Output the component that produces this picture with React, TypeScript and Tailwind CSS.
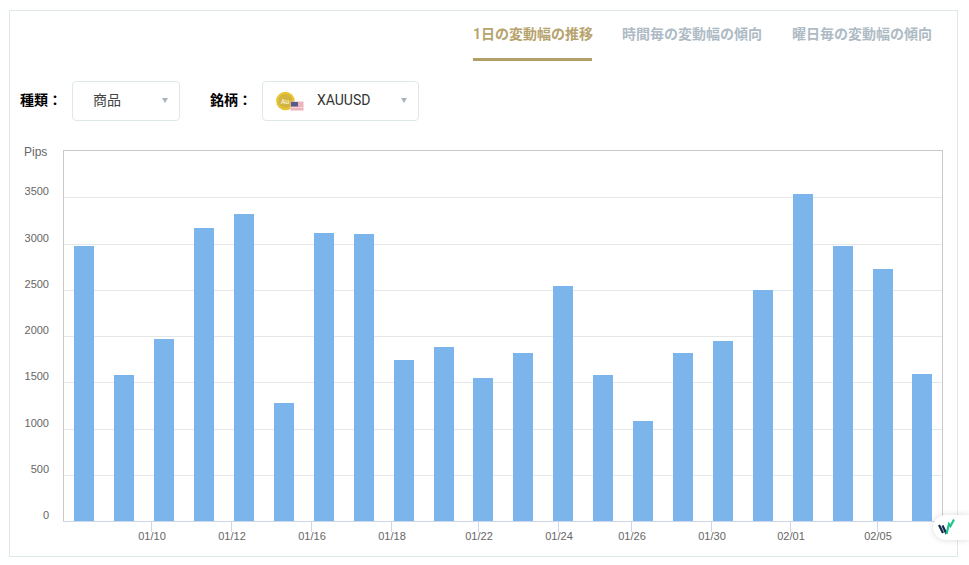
const tabs = ['1日の変動幅の推移', '時間毎の変動幅の傾向', '曜日毎の変動幅の傾向'];

// bar left edge and top edge, in chart pixels
const bars = [
  [74, 246], [114, 375], [154, 339], [194, 228], [234, 214], [274, 403], [314, 233], [354, 234],
  [394, 360], [434, 347], [473, 378], [513, 353], [553, 286], [593, 375], [633, 421], [673, 353],
  [713, 341], [753, 290], [793, 194], [833, 246], [873, 269], [912, 374],
];

const yTicks = [
  ['3500', 197], ['3000', 244], ['2500', 290], ['2000', 336],
  ['1500', 382], ['1000', 429], ['500', 475],
] as const;

const xTicks = [
  ['01/10', 151], ['01/12', 231], ['01/16', 311], ['01/18', 391], ['01/22', 478],
  ['01/24', 558], ['01/26', 631], ['01/30', 711], ['02/01', 790], ['02/05', 877],
] as const;

function Caret() {
  return <span className="h-0 w-0 border-x-[3px] border-t-[5px] border-x-transparent border-t-[#a9b3bb]" />;
}

function GoldIcon() {
  return (
    <svg width="28" height="22" viewBox="0 0 28 22" className="shrink-0">
      <circle cx="9.4" cy="12" r="9.3" fill="#e8c435" />
      <circle cx="9.4" cy="12" r="7" fill="#d2b440" />
      <text x="9" y="14.5" textAnchor="middle" fontSize="7" fontWeight="700" fill="#f3e9bd" fontFamily="Roboto, sans-serif">Au</text>
      <rect x="14.5" y="12.5" width="13" height="9" fill="#eeb3bd" />
      <rect x="14.5" y="18" width="13" height="1" fill="#f5d5da" />
      <rect x="15" y="13" width="7" height="4.5" fill="#565a8c" />
    </svg>
  );
}

function Chart() {
  return (
    <svg width="949" height="410" viewBox="0 0 949 410" className="block" fontFamily="'Liberation Sans', Arial, sans-serif">
      {/* svg origin is page x=10, y=146 -> shift so numbers below are page coords */}
      <g transform="translate(-10 -146)">
        <rect x="63.5" y="150.5" width="879" height="371" fill="none" stroke="#c9c9c9" />
        {yTicks.map(([label, y]) => (
          <g key={label}>
            <line x1="64" x2="942" y1={y + 0.5} y2={y + 0.5} stroke="#e3e7e8" />
            <text x="49" y={y - 2} textAnchor="end" fontSize="11" fill="#666">{label}</text>
          </g>
        ))}
        <text x="49" y="519" textAnchor="end" fontSize="11" fill="#666">0</text>
        <text x="24" y="156" fontSize="12" fill="#666">Pips</text>
        {bars.map(([x, top]) => (
          <rect key={x} x={x} y={top} width="20" height={521 - top} fill="#7cb5ec" />
        ))}
        <line x1="63" x2="943" y1="521.5" y2="521.5" stroke="#ccd6eb" />
        {xTicks.map(([label, x]) => (
          <g key={label}>
            <line x1={x + 0.5} x2={x + 0.5} y1="522" y2="532" stroke="#ccd6eb" />
            <text x={x + 1} y="540" textAnchor="middle" fontSize="11" fill="#666">{label}</text>
          </g>
        ))}
      </g>
    </svg>
  );
}

export default function App() {
  return (
    <div className="relative h-[565px] w-[969px] overflow-hidden bg-white pl-[9px] pt-[10px] font-['Roboto','Noto_Sans_CJK_JP',sans-serif]">
      <div className="h-[547px] w-[949px] border border-[#dfe8e8]">
        <div className="flex justify-end gap-[30px] pr-[25px]">
          {tabs.map((tab, i) => (
            <div
              key={tab}
              className={`h-[50px] whitespace-nowrap pt-[13px] text-[14px] font-bold leading-[20px] ${
                i === 0 ? 'w-[119px] border-b-[3px] border-[#b09f66] text-[#b6a36d]' : 'text-[#aebbc5]'
              }`}
            >
              {tab}
            </div>
          ))}
        </div>

        <div className="mt-[20px] flex items-center pl-[10px]">
          <span className="w-[52px] pb-[2px] text-[14px] font-bold text-black">種類：</span>
          <div className="flex h-[40px] w-[108px] items-center justify-between rounded border border-[#dfe8e8] pb-[2px] pl-[20px] pr-[11px] text-[14px] text-[#444]">
            商品
            <Caret />
          </div>
          <span className="ml-[30px] w-[52px] pb-[2px] text-[14px] font-bold text-black">銘柄：</span>
          <div className="flex h-[40px] w-[157px] items-center rounded border border-[#dfe8e8] pb-[2px] pl-[13px] pr-[11px] text-[14px] text-[#333]">
            <GoldIcon />
            <span className="ml-[13px] flex-1">XAUUSD</span>
            <Caret />
          </div>
        </div>

        <div className="mt-[25px]">
          <Chart />
        </div>
      </div>

      <div className="absolute left-[933px] top-[515px] flex h-[25px] w-[36px] items-start rounded-l-full bg-white pl-[5px] pt-[3px] shadow-[0_0_6px_rgba(0,0,0,0.15)]">
        <svg width="18" height="18" viewBox="0 0 18 18">
          <path d="M1 7 L5 15 M4.5 7.5 L8.5 16" fill="none" stroke="#15294b" strokeWidth="2.2" />
          <path d="M8.5 16 L11 6 L12.5 8 L16 1.5" fill="none" stroke="#1fc58e" strokeWidth="2.2" />
        </svg>
      </div>
    </div>
  );
}
